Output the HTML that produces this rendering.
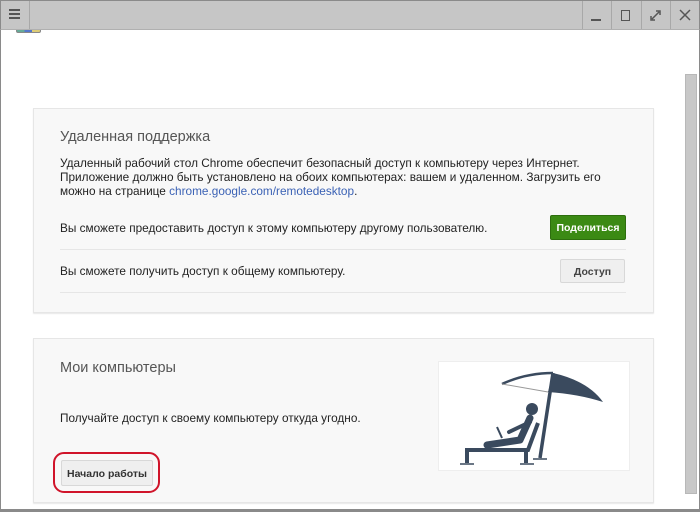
<!DOCTYPE html>
<html><head><meta charset="utf-8"><style>
*{margin:0;padding:0;box-sizing:border-box}
body{width:700px;height:512px;overflow:hidden;background:#fff;font-family:"Liberation Sans",Arial,sans-serif;position:relative;color:#222}
.abs{position:absolute}
.tb{left:0;top:0;width:700px;height:30px;background:#c6c6c6;border:1px solid #8a8a8a;border-bottom:1px solid #b0b0b0}
.div{top:1px;width:1px;height:28px;background:#a8a8a8}
.card{background:#f8f8f8;border:1px solid #e6e6e6;box-shadow:0 1px 1px #e8e8e8}
.h{font-size:14.5px;color:#555}
.t{font-size:11.8px;color:#222;line-height:14px;white-space:nowrap}
.sep{height:1px;background:#e6e6e6}
.btn{font-size:10.5px;font-weight:bold;text-align:center;border-radius:2px}
</style></head><body>
<div class="abs" style="left:0;top:0;width:1px;height:512px;background:#8a8a8a"></div>
<div class="abs" style="right:0;top:0;width:1px;height:512px;background:#8a8a8a"></div>
<div class="abs" style="left:0;top:509px;width:700px;height:3px;background:#8a8a8a"></div>
<div class="abs" style="left:685px;top:74px;width:12px;height:420px;background:#c8c8c8;border:1px solid #b8b8b8"></div>
<div class="abs" style="left:16px;top:28px;width:25px;height:5px;border-radius:2px;background:linear-gradient(90deg,#6a9 0 33%,#57c 33% 66%,#dc7 66%);border:1px solid #888"></div>
<div class="abs tb"></div>
<div class="abs div" style="left:29px"></div>
<div class="abs div" style="left:582px"></div>
<div class="abs div" style="left:611px"></div>
<div class="abs div" style="left:641px"></div>
<div class="abs div" style="left:670px"></div>
<div class="abs" style="left:9px;top:9px;width:11px;height:2px;background:#555;box-shadow:0 4px 0 #555,0 8px 0 #555"></div>
<div class="abs" style="left:591px;top:19px;width:10px;height:2px;background:#555"></div>
<div class="abs" style="left:621px;top:10px;width:9px;height:11px;border:1.5px solid #555"></div>
<svg class="abs" style="left:648px;top:8px" width="16" height="14"><path d="M4 11 L11 4 M3 8 v4 h4 M8 3 h4 v4" stroke="#555" stroke-width="1.5" fill="none"/></svg>
<svg class="abs" style="left:678px;top:8px" width="14" height="14"><path d="M2 2 L12 12 M12 2 L2 12" stroke="#555" stroke-width="1.5"/></svg>

<div class="abs card" style="left:33px;top:108px;width:621px;height:205px"></div>
<div class="abs h" style="left:60px;top:129px">Удаленная поддержка</div>
<div class="abs t" style="left:60px;top:156px">Удаленный рабочий стол Chrome обеспечит безопасный доступ к компьютеру через Интернет.<br>Приложение должно быть установлено на обоих компьютерах: вашем и удаленном. Загрузить его<br>можно на странице <span style="color:#3b62b5">chrome.google.com/remotedesktop</span>.</div>
<div class="abs t" style="left:60px;top:221px">Вы сможете предоставить доступ к этому компьютеру другому пользователю.</div>
<div class="abs btn" style="left:550px;top:215px;width:76px;height:25px;line-height:25px;background:#3b8a14;border:1px solid #2d6e0e;color:#fff">Поделиться</div>
<div class="abs sep" style="left:60px;top:249px;width:566px"></div>
<div class="abs t" style="left:60px;top:264px">Вы сможете получить доступ к общему компьютеру.</div>
<div class="abs btn" style="left:560px;top:259px;width:65px;height:24px;line-height:24px;background:#efefef;border:1px solid #d8d8d8;color:#444">Доступ</div>
<div class="abs sep" style="left:60px;top:292px;width:566px"></div>

<div class="abs card" style="left:33px;top:338px;width:621px;height:165px"></div>
<div class="abs h" style="left:60px;top:360px">Мои компьютеры</div>
<div class="abs t" style="left:60px;top:411px">Получайте доступ к своему компьютеру откуда угодно.</div>
<div class="abs btn" style="left:61px;top:460px;width:92px;height:26px;line-height:26px;background:#efefef;border:1px solid #d8d8d8;color:#333">Начало работы</div>
<div class="abs" style="left:53px;top:452px;width:107px;height:41px;border:2px solid #d0142a;border-radius:11px"></div>
<div class="abs" style="left:438px;top:361px;width:192px;height:110px;background:#fff;border:1px solid #eee"></div>
<svg class="abs" style="left:438px;top:361px" width="192" height="110">
<g fill="#3a4a5e" stroke="#3a4a5e">
<path d="M115 12 Q150 20 165 41 Q140 33 110 31 Z" stroke="none"/>
<path d="M64 23 Q88 12 115 12" stroke-width="2.5" fill="none"/>
<path d="M64 23 L110 31" stroke="#999" stroke-width="1" fill="none"/>
<path d="M115 12 L102 97" stroke-width="3.5" fill="none"/>
<path d="M95 98 h14" stroke-width="1.5"/>
<circle cx="94" cy="48" r="6" stroke="none"/>
<path d="M92 57 L82 79 L49 84" stroke-width="7" fill="none" stroke-linecap="round" stroke-linejoin="round"/>
<path d="M92 61 L71 71" stroke-width="4" fill="none" stroke-linecap="round"/>
<path d="M59 66 L64 77" stroke-width="2"/>
<path d="M100 62 L90 89 L27 89" stroke-width="4" fill="none"/>
<path d="M29 88 v14 M88 88 v14" stroke-width="4"/>
<path d="M22 103 h14 M82 103 h14" stroke-width="1.5"/>
</g></svg>
</body></html>
